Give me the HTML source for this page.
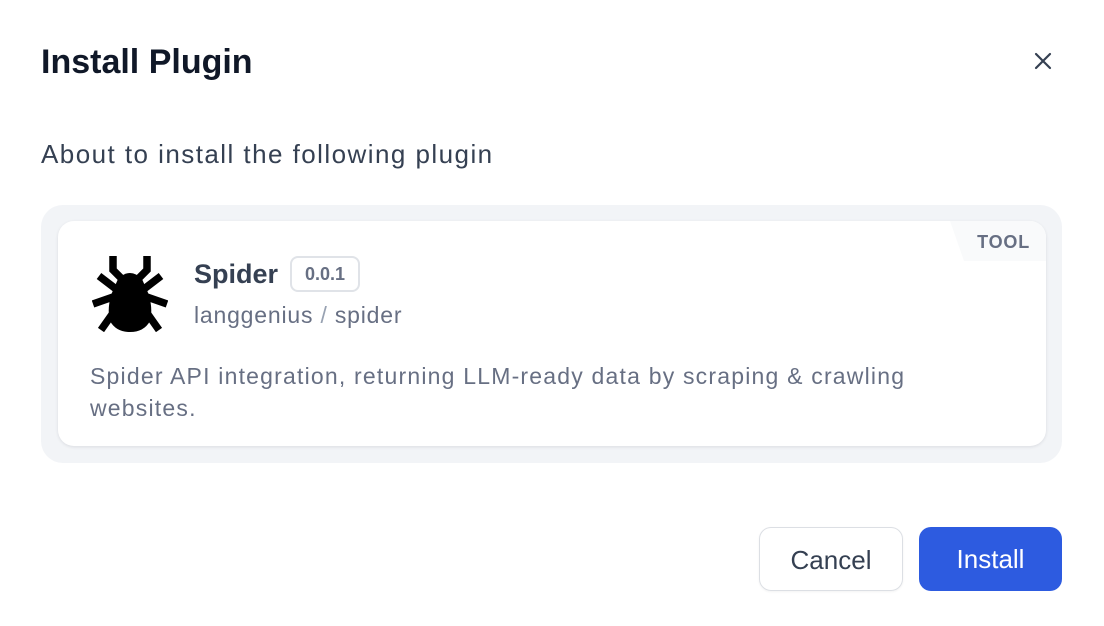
<!DOCTYPE html>
<html><head><style>
*{box-sizing:border-box;margin:0;padding:0}
body{width:1104px;height:626px;background:#fff;font-family:"Liberation Sans",Arial,sans-serif;position:relative;overflow:hidden}
.t{position:absolute;left:41px;top:43px;font-size:34px;font-weight:bold;color:#101828}
.x{position:absolute;left:1032px;top:50px;width:22px;height:22px}
.sub{position:absolute;left:41px;top:139px;font-size:26px;letter-spacing:1.45px;color:#354052;white-space:nowrap}
.outer{position:absolute;left:41px;top:205px;width:1021px;height:258px;background:#f2f4f7;border-radius:22px}
.card{position:absolute;left:58px;top:221px;width:988px;height:225px;background:#fff;border-radius:16px;box-shadow:0 1px 3px rgba(16,24,40,.1);overflow:hidden}
.tag{position:absolute;right:0;top:0;width:96px;height:40px;background:#f9fafb;clip-path:polygon(0 0,100% 0,100% 100%,14px 100%);}
.tag span{position:absolute;right:16px;top:11px;font-size:18px;font-weight:bold;color:#676f83;letter-spacing:.8px}
.name{position:absolute;left:136px;top:38px;font-size:27px;font-weight:bold;color:#354052}
.ver{position:absolute;left:232px;top:35px;width:70px;height:36px;border:2px solid #e0e3e8;border-radius:8px;font-size:18px;color:#676f83;text-align:center;line-height:32px;font-weight:bold}
.org{position:absolute;left:136px;top:81px;font-size:23px;letter-spacing:.8px;color:#676f83;white-space:nowrap}
.desc{position:absolute;left:32px;top:139px;font-size:23px;letter-spacing:1.2px;color:#676f83;line-height:32px;width:880px}
.btn{position:absolute;top:527px;height:64px;border-radius:12px;font-size:26px;text-align:center;line-height:64px}
.c{left:759px;width:144px;border:1px solid #dcdfe4;color:#354052;box-shadow:0 1px 2px rgba(0,0,0,.05)}
.i{left:919px;width:143px;background:#2d5be0;color:#fff}
</style></head><body>
<div class="t">Install Plugin</div>
<svg class="x" viewBox="0 0 22 22"><path d="M4 4L18 18M18 4L4 18" stroke="#354052" stroke-width="2.2" stroke-linecap="round"/></svg>
<div class="sub">About to install the following plugin</div>
<div class="outer"></div>
<div class="card">
<div class="tag"><span>TOOL</span></div>
<svg style="position:absolute;left:34px;top:34px" width="76" height="77" viewBox="0 0 76 77">
<g fill="#000">
<path d="M26 24 Q38 12 50 24 L57 40 Q61 55 58 66 Q52 77 38 77 Q24 77 18 66 Q15 55 19 40 Z"/>
</g>
<g stroke="#000" stroke-width="7.5" fill="none">
<path d="M21 1V15L30 24M55 1V15L46 24"/>
<path d="M7 21L24 34M69 21L52 34"/>
<path d="M1 49L21 42M75 49L55 42"/>
<path d="M9 75L21 58M67 75L55 58"/>
</g>
</svg>
<div class="name">Spider</div>
<div class="ver">0.0.1</div>
<div class="org">langgenius<span style="color:#98a2b2"> / </span>spider</div>
<div class="desc">Spider API integration, returning LLM-ready data by scraping &amp; crawling websites.</div>
</div>
<div class="btn c">Cancel</div>
<div class="btn i">Install</div>
</body></html>
